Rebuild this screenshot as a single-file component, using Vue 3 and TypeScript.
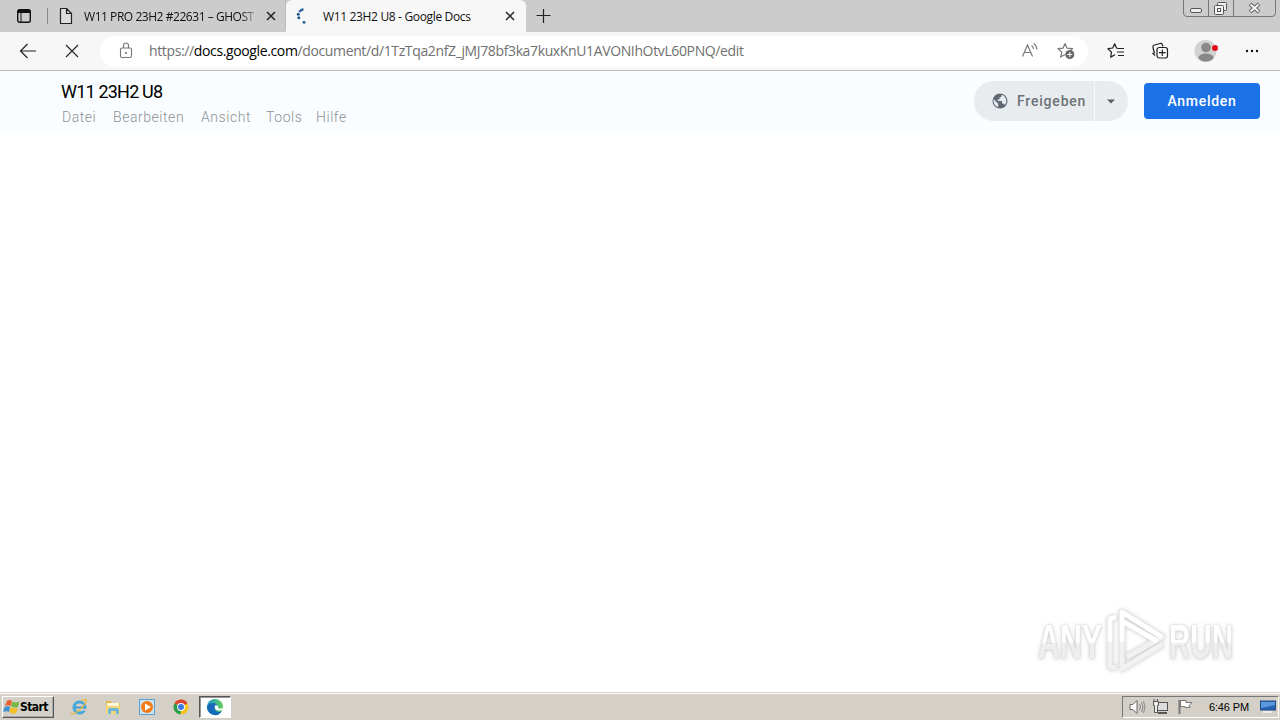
<template>
  <div class="screen">
    <header class="tab-strip">
      <div class="tab-actions">
        <svg width="16" height="16" viewBox="0 0 16 16">
          <rect x="1.7" y="1.7" width="12.6" height="12.6" rx="2" fill="none" stroke="#111" stroke-width="1.4" />
          <path d="M2 2h12v2.5H2z" fill="#111" stroke="#111" /><path d="M5 5v9" stroke="#111" />
        </svg>
      </div>
      <div class="tab tab-idle">
        <svg class="tab-icon" width="16" height="18" viewBox="0 0 16 18">
          <path d="M2.5 1.5h6l5 5v10h-11zM8.5 1.5v5h5" fill="#ddd" stroke="#222" stroke-width="1.2" stroke-linejoin="round" />
        </svg>
        <span class="tab-title first">W11 PRO 23H2 #22631 – GHOST</span>
        <svg class="tab-close" width="10" height="10" viewBox="0 0 10 10"><path d="M1 1l8 8M9 1L1 9" stroke="#222" stroke-width="1.5" /></svg>
      </div>
      <div class="tab tab-active">
        <svg class="tab-icon" width="16" height="18" viewBox="0 0 16 18">
          <path d="M9.5 2.2Q6.5 2.7 5.3 5" fill="none" stroke="#30679b" stroke-width="2.5" />
          <circle cx="4.3" cy="7.3" r="1.5" fill="#245887" />
          <circle cx="4.8" cy="10.8" r="1.5" fill="#245887" />
          <circle cx="10" cy="15.3" r="1.5" fill="#2d6899" />
        </svg>
        <span class="tab-title second">W11 23H2 U8 - Google Docs</span>
        <svg class="tab-close" width="10" height="10" viewBox="0 0 10 10"><path d="M1 1l8 8M9 1L1 9" stroke="#222" stroke-width="1.5" /></svg>
      </div>
      <svg class="new-tab" width="16" height="16" viewBox="0 0 16 16"><path d="M7.5 1v14M.5 7.5h14" stroke="#222" stroke-width="1.2" /></svg>
      <div class="window-controls">
        <svg width="94" height="18" viewBox="0 0 94 18">
          <path d="M.5 0v13q0 3.5 3.5 3.5h85q3.5 0 3.5-3.5V0M25.5 0v16M50.5 0v16" fill="none" stroke="#777" />
          <rect x="7.5" y="8.5" width="11" height="4" rx="1.5" fill="#eee" stroke="#555" />
          <rect x="34.5" y="2.5" width="9" height="8" rx="1" fill="#eee" stroke="#555" />
          <rect x="31.5" y="5.5" width="9" height="9" rx="1" fill="#f3f3f3" stroke="#555" />
          <rect x="34.5" y="8.5" width="3" height="3" fill="#fff" stroke="#555" />
          <path d="M67 4l9 8M76 4l-9 8" stroke="#666" stroke-width="4" />
          <path d="M67.5 4.5l8 7M75.5 4.5l-8 7" stroke="#f4f4f4" stroke-width="2" />
        </svg>
      </div>
    </header>

    <nav class="toolbar">
      <svg class="back" width="18" height="16" viewBox="0 0 18 16"><path d="M17 8H1.5M8.5 1l-7 7 7 7" fill="none" stroke="#222" stroke-width="1.2" /></svg>
      <svg class="stop" width="14" height="14" viewBox="0 0 14 14"><path d="M1 1l12 12M13 1L1 13" stroke="#222" stroke-width="1.1" /></svg>
      <div class="address">
        <svg class="lock" width="14" height="18" viewBox="0 0 14 18">
          <rect x="1.5" y="6" width="11" height="9.5" rx="1.5" fill="none" stroke="#777" stroke-width="1.1" />
          <path d="M4.5 6V3.5q0-2.5 2.5-2.5t2.5 2.5V6" fill="none" stroke="#777" stroke-width="1.1" />
          <circle cx="7" cy="11" r="1" fill="#666" />
        </svg>
        <span class="url">https://<b>docs.google.com</b>/document/d/1TzTqa2nfZ_jMJ78bf3ka7kuxKnU1AVONIhOtvL60PNQ/edit</span>
        <svg class="read-aloud" width="18" height="18" viewBox="0 0 18 18">
          <path d="M1.5 14.5L6.5 3l5 11.5M3.3 10.5h6.4M10.5 3.5q1.8 1.2 2 3.5M12.5 1.5q3.3 2 3.3 6" fill="none" stroke="#777" stroke-width="1.2" />
        </svg>
        <svg class="add-star" width="19" height="18" viewBox="0 0 19 18">
          <path d="M8 1.5l2 4.7 5.5.5-3 2.8M8 1.5L6 6.2l-5 .5 3.800 3.400-1.200 5 4.400-2.500" fill="none" stroke="#777" stroke-width="1.2" stroke-linejoin="round" />
          <circle cx="12.8" cy="12.5" r="4.5" fill="#666" /><path d="M12.8 10v5M10.3 12.5h5" stroke="#fff" />
        </svg>
      </div>
      <svg class="favorites" width="18" height="18" viewBox="0 0 18 18">
        <path d="M11 6.5L9.5 6 7.7 1.8 5.7 6 1 6.7l3.5 3.4-.8 5L8 12.8M11 6.5h6M10 10h7M11 13.5h6" fill="none" stroke="#222" stroke-width="1.2" stroke-linejoin="round" />
      </svg>
      <svg class="collections" width="18" height="18" viewBox="0 0 18 18">
        <path d="M3.5 11.5L2 5.5Q1.5 3.5 3.5 3L9 1.5q2-.5 2.5 1.5L12 4.5M4 13.5L1.5 11" fill="none" stroke="#222" stroke-width="1.2" />
        <rect x="6" y="5.5" width="10.5" height="10.5" rx="2.2" fill="#f7f7f7" stroke="#222" stroke-width="1.2" />
        <path d="M11.3 7.5v6.5M8 10.7h6.6" stroke="#222" stroke-width="1.2" />
      </svg>
      <svg class="profile" width="24" height="24" viewBox="0 0 24 24">
        <circle cx="11.5" cy="12" r="11" fill="#d1d3d0" />
        <circle cx="12" cy="8.5" r="4.8" fill="#888" /><ellipse cx="12" cy="18.5" rx="7.5" ry="4" fill="#888" />
        <circle cx="21" cy="9" r="3" fill="#e00b18" />
      </svg>
      <svg class="more" width="14" height="4" viewBox="0 0 14 4"><circle v-for="x in [2, 7, 12]" :key="x" :cx="x" cy="2" r="1.2" fill="#111" /></svg>
    </nav>

    <main class="docs">
      <div class="docs-header">
        <div class="document-info">
          <div class="document-title">W11 23H2 U8</div>
          <div class="menu">
            <span v-for="item in menuItems" :key="item.label" :style="{ width: item.width + 'px' }">{{ item.label }}</span>
          </div>
        </div>
        <div class="share">
          <svg class="globe" width="16" height="16" viewBox="0 0 16 16">
            <circle cx="8" cy="8" r="7.5" fill="#5f6873" />
            <path d="M1.5 6l4.7 4.7v3.5Q2 13 1.5 8zM9.5 1.7Q10 4 7.5 4.5v2H5.7V8H10v2.5h1.5l1.3 1.5q2-2 1.5-5-.8-4-4.8-5.3z" fill="#e9ecef" />
          </svg>
          <span class="share-label">Freigeben</span>
          <span class="share-arrow"><svg width="8" height="5" viewBox="0 0 8 5"><path d="M0 .5h8L4 4.5z" fill="#565e65" /></svg></span>
        </div>
        <button class="sign-in">Anmelden</button>
      </div>
      <svg class="watermark" width="200" height="68" viewBox="0 0 200 68">
        <defs>
          <linearGradient id="mark" x1="0" y1="0" x2="0" y2="1">
            <stop offset="52%" stop-color="#fff" /><stop offset="55%" stop-color="#eee" />
          </linearGradient>
        </defs>
        <g class="mark-letters" fill="url(#mark)">
          <text x="2" y="51" textLength="64" lengthAdjust="spacingAndGlyphs">ANY</text>
          <text x="133" y="51" textLength="64" lengthAdjust="spacingAndGlyphs">RUN</text>
        </g>
        <g class="mark-shape" fill="none" stroke-linejoin="round">
          <path d="M80 10l-6 2v48l6 1M86 59V5l40 25-35 20M86 14l35 20M84 63l43-26" stroke="#ddd" stroke-width="6" />
          <path d="M80 10l-6 2v48l6 1M86 59V5l40 25-35 20M86 14l35 20M84 63l43-26" stroke="#f1f1f1" stroke-width="5" />
          <path d="M80 10l-6 2v23M86 35V5l40 25M86 14l35 20" stroke="#fff" stroke-width="4.5" />
        </g>
      </svg>
    </main>

    <footer class="taskbar">
      <div class="start">
        <svg width="17" height="18" viewBox="0 0 17 18">
          <path d="M4 3q3-2 5 0L7.500 8Q5 6.500 2 8z" fill="#e9602d" /><path d="M9.500 3.500q3 2 7 0L15 9q-3.500 1.500-7-1z" fill="#78b843" />
          <path d="M1.800 8.800q3-1 5.500 0L5.800 14Q3 12.500 0 14z" fill="#3e91d4" /><path d="M7.800 9q3 2 7 1l-1.500 5q-3.500 1.500-7-1z" fill="#f4bd20" />
        </svg>
        <span>Start</span>
      </div>
      <div class="launchers">
        <svg width="18" height="18" viewBox="0 0 18 18">
          <circle cx="9.5" cy="9.5" r="5.5" fill="none" stroke="#43a9dc" stroke-width="3" /><path d="M5 9.5h11" stroke="#3b9bce" stroke-width="2" />
          <path d="M2 15Q0 18 6 14.5T16 4q2-4-5-1" fill="none" stroke="#e9b83b" stroke-width="1.3" />
          <path d="M12 10.8h5v1.7h-5z" fill="#d4d0c8" />
        </svg>
        <svg width="18" height="18" viewBox="0 0 18 18">
          <path d="M2 3h5l1 2h8v11H2z" fill="#e2b850" /><path d="M3 5h12v4H3z" fill="#fff8d6" /><path d="M2 8h14v8H2z" fill="#f3d778" />
          <path d="M4 16v-4q0-2 2-2h7q2 0 2 2v4h-3v-3H7v3z" fill="#6eb7dc" />
        </svg>
        <svg width="18" height="18" viewBox="0 0 18 18">
          <rect x="1.5" y="1.5" width="15" height="15" fill="#c9e2f4" stroke="#5ba1ce" /><circle cx="9" cy="9" r="6" fill="#f47c16" />
          <path d="M7 5.5l6 3.5-6 3.5z" fill="#fff" />
        </svg>
        <svg width="18" height="18" viewBox="0 0 18 18">
          <circle cx="9" cy="9" r="7.5" fill="#f6c51d" /><path d="M9 9L2.5 5.25A7.5 7.5 0 0 1 15.5 5.25z" fill="#df4335" />
          <path d="M9 9L2.5 5.25A7.5 7.5 0 0 0 8.5 16.5z" fill="#279b50" /><circle cx="9" cy="9" r="4" fill="#fff" /><circle cx="9" cy="9" r="3" fill="#3e7be0" />
        </svg>
      </div>
      <div class="edge-task">
        <svg width="18" height="18" viewBox="0 0 18 18">
          <defs><linearGradient id="edge"><stop stop-color="#1799d4" /><stop offset="1" stop-color="#65cd55" /></linearGradient></defs>
          <circle cx="9" cy="9" r="8" fill="url(#edge)" />
          <path d="M1 9q1-4 6-4 4 0 4 3-5 1-1 5 3 2 6 0-3 5-8 4-7-2-7-8z" fill="#1669b8" />
          <path d="M9.5 7q-2 3 1 5 3 1 6 0L17 10q-3 1-5 0 1-2-2.5-3z" fill="#fff" />
        </svg>
      </div>
      <div class="tray">
        <svg class="speaker" width="18" height="18" viewBox="0 0 18 18">
          <path d="M2 6.5h3l4-4v13l-4-4H2z" fill="#fff" stroke="#666" /><path d="M11.5 6q2 3 0 6M13.5 4q3 5 0 10M15.5 3q3 6 0 12" fill="none" stroke="#888" />
        </svg>
        <svg class="network" width="18" height="18" viewBox="0 0 18 18">
          <rect x="4.5" y="4.5" width="11" height="8" fill="#ddd" stroke="#555" /><path d="M6 15h9" stroke="#555" stroke-width="2" />
          <path d="M2 1v3M5.5 1v3M1.5 3.5h5v4h-1v7h-3v-7h-1z" fill="#eee" stroke="#555" />
        </svg>
        <svg class="flag" width="18" height="18" viewBox="0 0 18 18">
          <path d="M3.5 2v14" stroke="#777" stroke-width="2" /><path d="M4.5 2.5H10v2h6l-3 3 1 2H9v-1H4.5z" fill="#fff" stroke="#777" />
        </svg>
        <time>6:46 PM</time>
        <svg class="display" width="16" height="14" viewBox="0 0 16 14">
          <rect x=".5" y="1" width="15" height="9" fill="#2764b5" stroke="#214d86" /><path d="M1 2h14v3L1 8z" fill="#5a98df" /><path d="M3 12h9" stroke="#eee" stroke-width="2" />
        </svg>
      </div>
    </footer>
  </div>
</template>

<script setup lang="ts">
interface MenuItem {
  label: string
  width: number
}

const menuItems: MenuItem[] = [
  { label: 'Datei', width: 51 },
  { label: 'Bearbeiten', width: 88 },
  { label: 'Ansicht', width: 65 },
  { label: 'Tools', width: 50 },
  { label: 'Hilfe', width: 32 }
]
</script>

<style>
body {
  margin: 0;
  overflow: hidden;
}
</style>

<style scoped>
* {
  box-sizing: border-box;
}

svg {
  display: block;
  flex: none;
}

.screen {
  width: 1280px;
  height: 720px;
  display: flex;
  flex-direction: column;
  overflow: hidden;
  background: #fff;
  font-family: "Open Sans", "Noto Sans", sans-serif;
}

.tab-strip {
  height: 32px;
  flex: none;
  display: flex;
  background: #ccc;
}

.tab-actions {
  width: 48px;
  padding: 8px 0 0 16px;
  border-right: 1px solid #888;
  height: 24px;
  border-image: linear-gradient(transparent 8px, #888 8px) 1;
}

.tab {
  height: 32px;
  display: flex;
  align-items: center;
  color: #111;
  font-size: 12px;
  white-space: nowrap;
}

.tab-idle {
  width: 238px;
  padding-left: 10px;
  border-right: 1px solid #bbb;
  border-bottom-right-radius: 5px;
}

.tab-active {
  width: 240px;
  padding-left: 8px;
  background: #f7f7f7;
  border-radius: 6px 6px 0 0;
}

.tab-title {
  overflow: hidden;
}

.first {
  width: 172px;
  margin-left: 10px;
  letter-spacing: -0.45px;
  mask-image: linear-gradient(90deg, #000 91%, transparent 102%);
}

.second {
  width: 172px;
  margin-left: 13px;
  letter-spacing: -0.34px;
}

.tab-close {
  margin-left: 10px;
}

.new-tab {
  margin: 8px 0 0 10px;
}

.window-controls {
  margin-left: auto;
  width: 97px;
}

.toolbar {
  height: 39px;
  flex: none;
  display: flex;
  align-items: center;
  background: #f7f7f7;
  border-bottom: 1px solid #b9b9b9;
}

.back {
  margin-left: 19px;
}

.stop {
  margin-left: 28px;
}

.address {
  width: 988px;
  height: 31px;
  margin-left: 21px;
  display: flex;
  align-items: center;
  background: #fff;
  border-radius: 16px;
}

.lock {
  margin-left: 19px;
}

.url {
  width: 870px;
  margin-left: 16px;
  color: #707070;
  font-size: 14px;
  line-height: 20px;
  letter-spacing: -0.37px;
  white-space: nowrap;
}

.url b {
  color: #000;
  font-weight: 400;
}

.read-aloud {
  margin-left: 2px;
}

.add-star {
  margin-left: 18px;
}

.favorites {
  margin-left: 19px;
}

.collections {
  margin-left: 26px;
}

.profile {
  margin-left: 25px;
}

.more {
  margin-left: 27px;
}

.docs {
  position: relative;
  height: 621px;
  flex: none;
  background: #fff;
}

.docs-header {
  height: 61px;
  display: flex;
  background: #fafdff;
  font-family: Roboto, sans-serif;
}

.document-info {
  width: 974px;
  padding: 10px 0 0 61px;
}

.document-title {
  height: 22px;
  color: #000;
  font-size: 18px;
  line-height: 22px;
  letter-spacing: -0.8px;
}

.menu {
  display: flex;
  margin-top: 5px;
  padding-left: 1px;
  color: #8c9297;
  font-size: 14px;
  font-weight: 300;
  line-height: 18px;
  letter-spacing: 0.55px;
}

.share {
  width: 154px;
  height: 40px;
  margin-top: 10px;
  display: flex;
  align-items: center;
  color: #6c7278;
  background: #e9ecee;
  border-radius: 20px;
  font-size: 14px;
  font-weight: 500;
}

.globe {
  margin-left: 18px;
}

.share-label {
  width: 77px;
  margin-left: 9px;
  letter-spacing: 0.8px;
}

.share-arrow {
  height: 40px;
  padding: 18px 0 0 12px;
  border-left: 1px solid #f8f9fa;
}

.sign-in {
  width: 116px;
  height: 36px;
  margin: 12px 0 0 16px;
  padding: 0;
  border: 0;
  border-radius: 4px;
  color: #fff;
  background: #1b72e8;
  font: 500 14px Roboto, sans-serif;
  letter-spacing: 0.7px;
}

.watermark {
  position: absolute;
  right: 44px;
  bottom: 17px;
  overflow: visible;
}

.mark-letters {
  font: 700 49px "Liberation Sans", sans-serif;
  filter: drop-shadow(0 0 1px #ccc) drop-shadow(0 1px 2px #ddd);
}

.mark-shape {
  filter: drop-shadow(0 0 2px #ccc);
}

.taskbar {
  height: 28px;
  flex: none;
  display: flex;
  align-items: center;
  background: #d4d0c8;
  border-top: 1px solid #d4d0c8;
  box-shadow: inset 0 1px #fff;
  font-family: "Liberation Sans", sans-serif;
}

.start {
  width: 52px;
  height: 22px;
  margin-left: 2px;
  display: flex;
  align-items: center;
  border: 1px solid;
  border-color: #fff #555 #555 #fff;
  box-shadow: inset -1px -1px #aaa;
  font: 700 12px "DejaVu Sans Condensed", "DejaVu Sans", sans-serif;
}

.start span {
  letter-spacing: -0.6px;
}

.launchers {
  display: flex;
  gap: 16px;
  margin-left: 16px;
}

.edge-task {
  width: 32px;
  height: 22px;
  margin-left: 9px;
  padding: 1px 0 0 6px;
  border: 1px solid;
  border-color: #555 #fff #fff #555;
  box-shadow: inset 1px 1px #999;
  background: #fff;
}

.tray {
  width: 157px;
  height: 22px;
  margin-left: auto;
  margin-right: 1px;
  display: flex;
  align-items: center;
  border: 1px solid;
  border-color: #777 #fff #fff #777;
}

.speaker {
  margin-left: 5px;
}

.network {
  margin-left: 6px;
}

.flag {
  margin-left: 6px;
}

.tray time {
  width: 41px;
  margin-left: 15px;
  font-size: 11px;
  letter-spacing: -0.15px;
  white-space: nowrap;
}

.display {
  margin-left: 10px;
}
</style>
